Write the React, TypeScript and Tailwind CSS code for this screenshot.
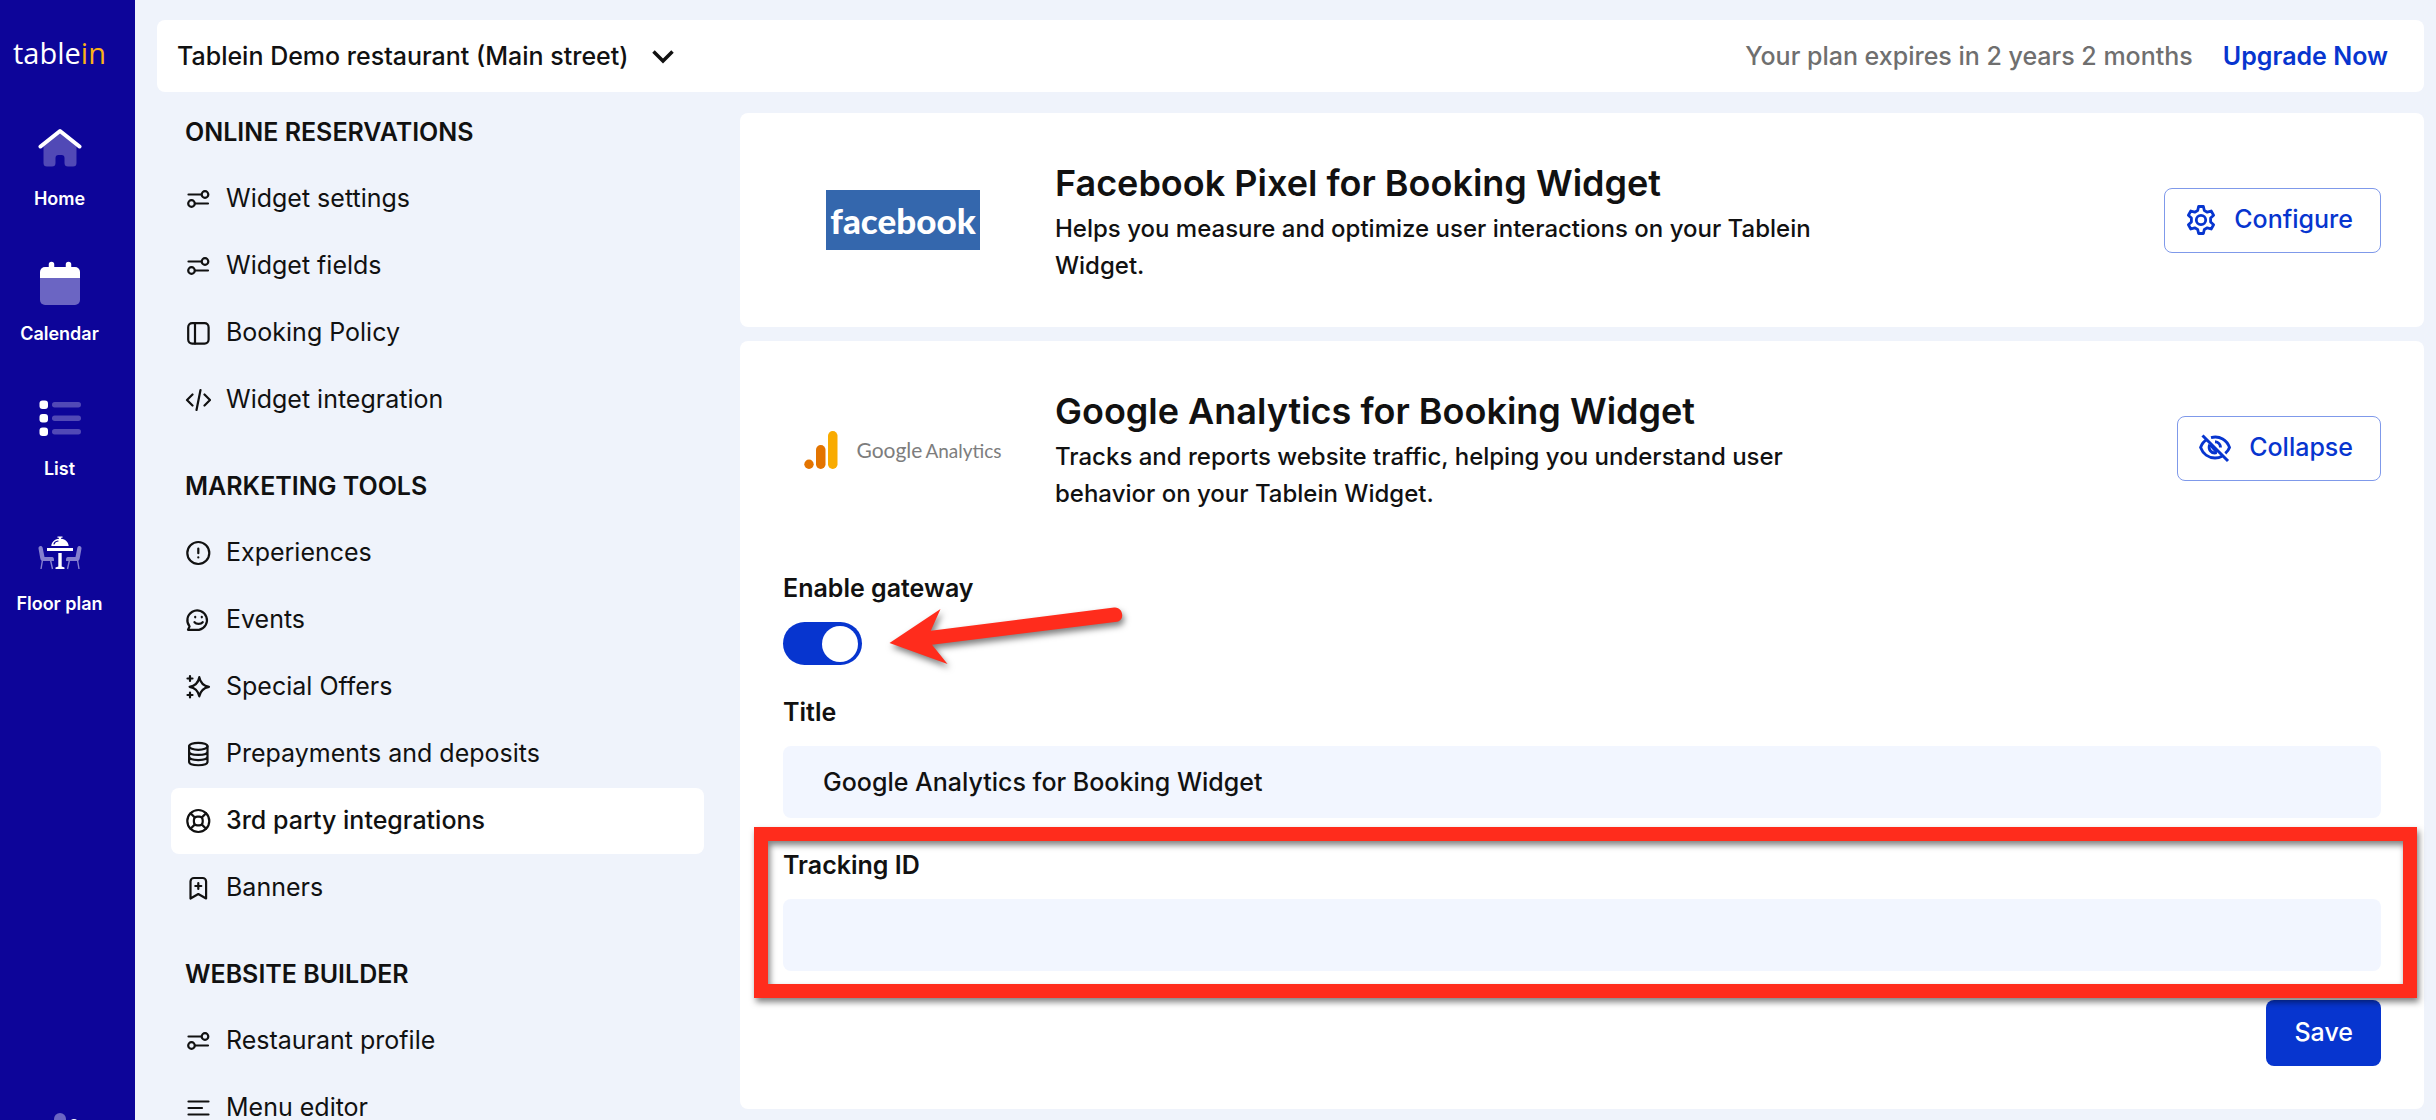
import * as React from 'react';

interface IMenuItem {
  title: string;
  icon: React.ReactNode;
  active?: boolean;
}

interface IMenuSection {
  title: string;
  items: IMenuItem[];
}

const MenuIcon: React.FC<{ children: React.ReactNode }> = ({ children }) => (
  <svg
    className="h-[26px] w-[26px] shrink-0"
    viewBox="0 0 26 26"
    fill="none"
    stroke="currentColor"
    strokeWidth="2.2"
    strokeLinecap="round"
    strokeLinejoin="round"
    aria-hidden="true"
  >
    {children}
  </svg>
);

const SlidersIcon = () => (
  <MenuIcon>
    <path d="M3.5 8.5H16M10 17.5h13" />
    <circle cx="20" cy="8.5" r="3.3" />
    <circle cx="6.5" cy="17.5" r="3.3" />
  </MenuIcon>
);

const PanelIcon = () => (
  <MenuIcon>
    <rect x="3.2" y="3.2" width="20.4" height="20.4" rx="4" />
    <path d="M10 3.2v20.4" />
  </MenuIcon>
);

const CodeIcon = () => (
  <MenuIcon>
    <path d="M7.5 7.5 2 13l5.5 5.5M19.5 7.5 25 13l-5.5 5.5M15.5 3l-4 20" />
  </MenuIcon>
);

const AlertIcon = () => (
  <MenuIcon>
    <circle cx="13.3" cy="13" r="11" />
    <path d="M13.3 8.5v4.7M13.3 17.3v.1" />
  </MenuIcon>
);

const ChatSmileIcon = () => (
  <MenuIcon>
    <path d="M3 22.8l1.6-3.4A9.8 9.8 0 1 1 14 22.8Z" />
    <path d="M9.5 15.2c1.8 2.2 6.4 2.2 8.2 0M10.2 9.8v.5M16.8 9.8v.5" />
  </MenuIcon>
);

const SparkleIcon = () => (
  <MenuIcon>
    <path d="M14.3 3.2c.9 5 4.4 8.6 9.7 9.6-5.3 1-8.8 4.6-9.7 9.6-.9-5-3.9-8.6-9.7-9.6 5.8-1 8.8-4.6 9.7-9.6Z" />
    <path d="M5 2v5M2.5 4.5h5M5 18.5v5M2.5 21h5" />
  </MenuIcon>
);

const DatabaseIcon = () => (
  <MenuIcon>
    <ellipse cx="13.3" cy="5.3" rx="9.2" ry="3.5" />
    <path d="M4.100 5.300v15.400c0 4.700 18.400 4.700 18.400 0V5.300M4.100 10.500c0 4.600 18.400 4.600 18.400 0M4.100 15.600c0 4.600 18.400 4.600 18.400 0" />
  </MenuIcon>
);

const LifebuoyIcon = () => (
  <MenuIcon>
    <circle cx="13.3" cy="13" r="11" />
    <rect x="8.9" y="8.6" width="8.8" height="8.8" rx="3.5" />
    <path d="M5.5 5.2l4.2 4.2M21.1 5.2l-4.2 4.2M5.5 20.8l4.2-4.2M21.1 20.8l-4.2-4.2" />
  </MenuIcon>
);

const BookmarkIcon = () => (
  <MenuIcon>
    <path d="M5.5 23.5V6.5a3.5 3.5 0 0 1 3.5-3.5h8.6a3.5 3.5 0 0 1 3.5 3.5v17l-7.8-4.5Z" />
    <path d="M13.3 8v6M10.3 11h6" />
  </MenuIcon>
);

const LinesIcon = () => (
  <MenuIcon>
    <path d="M3.5 6.5h20M3.5 13h13.5M3.5 19.5h20" />
  </MenuIcon>
);

const HomeIcon = () => (
  <svg className="h-11 w-11" viewBox="0 0 44 44" fill="none" aria-hidden="true">
    <path
      d="M5.5 17.5 22 5l16.5 12.5V37a3.5 3.5 0 0 1-3.5 3.5h-5a3.5 3.5 0 0 1-3.5-3.5v-5a3 3 0 0 0-3-3h-3a3 3 0 0 0-3 3v5a3.5 3.5 0 0 1-3.5 3.5H9A3.5 3.5 0 0 1 5.5 37Z"
      fill="#5149b6"
    />
    <path d="M2.5 20.5 22 5l19.5 15.5" stroke="#fff" strokeWidth="4" strokeLinecap="round" strokeLinejoin="round" />
  </svg>
);

const CalendarIcon = () => (
  <svg className="h-11 w-11" viewBox="0 0 44 44" fill="none" aria-hidden="true">
    <path d="M2 17h40v22a5 5 0 0 1-5 5H7a5 5 0 0 1-5-5Z" fill="#6b65c3" />
    <path d="M2 17v-6a5 5 0 0 1 5-5h30a5 5 0 0 1 5 5v6Z" fill="#fff" />
    <path d="M13.5 3.5V9M30.5 3.5V9" stroke="#fff" strokeWidth="5.5" strokeLinecap="round" />
  </svg>
);

const ListIcon = () => (
  <svg className="h-11 w-11" viewBox="0 0 44 44" fill="none" aria-hidden="true">
    {[4.5, 18, 31.5].map((y) => (
      <React.Fragment key={y}>
        <rect x="1.5" y={y} width="8.5" height="8.5" rx="3" fill="#fff" />
        <rect x="14" y={y + 1.5} width="29" height="5.5" rx="2.7" fill="#5149b6" />
      </React.Fragment>
    ))}
  </svg>
);

const FloorPlanIcon = () => (
  <svg className="h-11 w-11" viewBox="0 0 44 44" fill="none" aria-hidden="true">
    <g fill="#8580cf">
      <path d="M.5 17.5c-.3-3 3.6-3.5 4.2-.5l1.800 9h7.500c1.800 0 2 1.500 2 4H5c-1.800 0-2.500-1-2.800-3Z" />
      <path d="M43.5 17.5c.3-3-3.6-3.5-4.2-.5l-1.800 9H30c-1.800 0-2 1.500-2 4h11c1.800 0 2.500-1 2.800-3Z" />
    </g>
    <path d="M4.5 29 3 38M12.500 29l2 9M39.500 29l1.500 9M31.500 29l-2 9" stroke="#8580cf" strokeWidth="1.4" />
    <path
      d="M19.5 5.5h5v1.300h-1.500v1c4.700.5 7.500 3.700 7.700 7.200H13.300c.2-3.500 3-6.700 7.700-7.200v-1h-1.500ZM9 17h26v3H9ZM20.300 22h3.400v13.500l2.800 1V38h-9v-1.500l2.800-1Z"
      fill="#fff"
    />
    <path d="M16 13c.5-1.500 1.800-2.700 4-3" stroke="#0d0599" strokeWidth="1.2" strokeLinecap="round" />
  </svg>
);

const GearIcon = () => (
  <svg
    className="h-[30px] w-[30px]"
    viewBox="0 0 30 30"
    fill="none"
    stroke="currentColor"
    strokeWidth="2.8"
    strokeLinejoin="round"
    aria-hidden="true"
  >
    <path d="M12.6 1.5h4.8l.9 4 3 1.7 3.9-1.2 2.4 4.2-3 2.800v4l3 2.800-2.400 4.200-3.900-1.200-3 1.700-.9 4h-4.800l-.9-4-3-1.700-3.900 1.200-2.400-4.200 3-2.800v-4l-3-2.800L4.800 6l3.900 1.200 3-1.700Z" />
    <circle cx="15" cy="15" r="4.7" />
  </svg>
);

const EyeOffIcon = () => (
  <svg
    className="h-8 w-8"
    viewBox="0 0 32 32"
    fill="none"
    stroke="currentColor"
    strokeWidth="2.9"
    aria-hidden="true"
  >
    <path d="M8 7.5C5 9.2 2.7 12 1.6 15.5 4 22 9.5 26 16 26c2.5 0 5-.6 7-1.700M12 5.600C21 3.500 28 8 30.500 15.500c-.8 2.200-2.300 4.200-4.200 5.800" />
    <path d="M10.7 12.5c-2 5 1.800 9.500 7 8.200M16 9.800c3.500.2 5.500 2.800 5.500 5.700" />
    <path d="M11.5 13l6.5 7.5" />
    <path d="M3.5 3.5 29 29" strokeWidth="3" />
  </svg>
);

const sideLinks = [
  { title: 'Home', icon: <HomeIcon /> },
  { title: 'Calendar', icon: <CalendarIcon /> },
  { title: 'List', icon: <ListIcon /> },
  { title: 'Floor plan', icon: <FloorPlanIcon /> },
];

const menuSections: IMenuSection[] = [
  {
    title: 'ONLINE RESERVATIONS',
    items: [
      { title: 'Widget settings', icon: <SlidersIcon /> },
      { title: 'Widget fields', icon: <SlidersIcon /> },
      { title: 'Booking Policy', icon: <PanelIcon /> },
      { title: 'Widget integration', icon: <CodeIcon /> },
    ],
  },
  {
    title: 'MARKETING TOOLS',
    items: [
      { title: 'Experiences', icon: <AlertIcon /> },
      { title: 'Events', icon: <ChatSmileIcon /> },
      { title: 'Special Offers', icon: <SparkleIcon /> },
      { title: 'Prepayments and deposits', icon: <DatabaseIcon /> },
      { title: '3rd party integrations', icon: <LifebuoyIcon />, active: true },
      { title: 'Banners', icon: <BookmarkIcon /> },
    ],
  },
  {
    title: 'WEBSITE BUILDER',
    items: [
      { title: 'Restaurant profile', icon: <SlidersIcon /> },
      { title: 'Menu editor', icon: <LinesIcon /> },
    ],
  },
];

const Sidebar = () => (
  <aside className="flex w-[135px] shrink-0 flex-col items-center bg-[#0d0599] pr-4 text-white">
    <a href="#" className="mt-[31px] font-['Open_Sans',sans-serif] text-[29px] leading-[44px]">
      table<span className="text-[#fbb216]">in</span>
    </a>
    <nav className="mt-[51px] flex flex-col gap-[50px]">
      {sideLinks.map((link) => (
        <a key={link.title} href="#" className="flex flex-col items-center gap-[17px]">
          {link.icon}
          <span className="text-lg leading-6 font-semibold whitespace-nowrap">{link.title}</span>
        </a>
      ))}
    </nav>
    <a href="#" aria-label="Settings" className="mt-auto h-2 shrink-0">
      <svg className="h-11 w-11" viewBox="0 0 44 44" aria-hidden="true">
        <circle cx="22" cy="7" r="6" fill="#6b65c3" />
        <circle cx="36" cy="12" r="5" fill="#fff" />
      </svg>
    </a>
  </aside>
);

const Header = () => (
  <header className="flex h-[72px] shrink-0 items-center justify-between rounded-lg bg-white pr-9 pl-5">
    <div className="relative flex items-center">
      <select
        aria-label="Restaurant"
        className="appearance-none bg-transparent pr-[50px] text-[25px] leading-8 font-medium outline-none"
      >
        <option>Tablein Demo restaurant (Main street)</option>
      </select>
      <svg
        className="pointer-events-none absolute right-1 h-6 w-6"
        viewBox="0 0 24 24"
        fill="none"
        stroke="currentColor"
        strokeWidth="3.5"
        aria-hidden="true"
      >
        <path d="M2.5 7.5 12 17l9.5-9.5" />
      </svg>
    </div>
    <div className="flex items-center gap-[30px] text-[25px] leading-8">
      <p className="font-medium text-[#6f6f6f]">Your plan expires in 2 years 2 months</p>
      <a href="#" className="font-semibold text-[#0735cf]">
        Upgrade Now
      </a>
    </div>
  </header>
);

const SettingsMenu = () => (
  <nav className="flex w-[533px] shrink-0 flex-col gap-[21px] pt-2">
    {menuSections.map((section) => (
      <section key={section.title}>
        <h2 className="flex h-[66px] items-center pl-3.5 text-[25px] font-semibold">{section.title}</h2>
        <ul className="flex flex-col gap-px">
          {section.items.map((item) => (
            <li key={item.title}>
              <a
                href="#"
                className={`flex h-[66px] items-center gap-[15px] rounded-lg pl-3.5 text-[25px] ${
                  item.active ? 'bg-white font-medium' : ''
                }`}
              >
                {item.icon}
                {item.title}
              </a>
            </li>
          ))}
        </ul>
      </section>
    ))}
  </nav>
);

interface IIntegrationHeadProps {
  logo: React.ReactNode;
  title: string;
  description: string;
  icon: React.ReactNode;
  action: string;
  onAction?: () => void;
}

const IntegrationHead: React.FC<IIntegrationHeadProps> = (props) => (
  <div className="flex items-center">
    <div className="flex w-60 shrink-0 justify-center">{props.logo}</div>
    <div className="ml-8 w-[800px]">
      <h3 className="text-4xl leading-[54px] font-semibold">{props.title}</h3>
      <p className="text-2xl leading-[37px] font-medium">{props.description}</p>
    </div>
    <button
      type="button"
      onClick={props.onAction}
      className="ml-auto flex h-[65px] items-center gap-[18px] rounded-lg border border-[#7f99ea] pr-[27px] pl-[21px] text-[25px] font-medium text-[#0735cf]"
    >
      {props.icon}
      {props.action}
    </button>
  </div>
);

const FacebookLogo = () => (
  <div className="flex h-[60px] w-[154px] items-center justify-center bg-[#3467ad] font-['Lato',sans-serif] text-[35px] leading-[60px] font-black text-white">
    facebook
  </div>
);

const AnalyticsLogo = () => (
  <div className="flex items-center gap-[18px] pt-1">
    <svg className="h-[38px] w-[34px]" viewBox="0 0 34 38" aria-hidden="true">
      <circle cx="5" cy="33.3" r="4.7" fill="#e37400" />
      <rect x="12" y="14" width="9.5" height="24" rx="4.7" fill="#e37400" />
      <rect x="24" y="0" width="9.5" height="38" rx="4.7" fill="#f9ab00" />
    </svg>
    <span className="flex items-baseline gap-[3px] font-['Lato',sans-serif] text-[19px] text-[#7d7d7d]">
      <span className="text-[21px]">Google</span>
      <span>Analytics</span>
    </span>
  </div>
);

const inputClass =
  'mt-[18px] block h-[72px] w-full rounded-lg bg-[#f2f6ff] px-10 text-[25px] font-medium outline-none';
const labelClass = 'block text-[25px] leading-8 font-semibold';

const AnalyticsForm = () => {
  const [enabled, setEnabled] = React.useState<boolean>(true);
  const [title, setTitle] = React.useState<string>('Google Analytics for Booking Widget');
  const [trackingId, setTrackingId] = React.useState<string>('');

  return (
    <form className="mt-[60px]" onSubmit={(e) => e.preventDefault()}>
      <label htmlFor="enable-gateway" className={labelClass}>
        Enable gateway
      </label>
      <div className="relative mt-[18px]">
        <input
          id="enable-gateway"
          type="checkbox"
          checked={enabled}
          onChange={(e) => setEnabled(e.target.checked)}
          className="flex h-[43px] w-[79px] appearance-none items-center rounded-full bg-gray-300 px-1 before:block before:h-9 before:w-9 before:rounded-full before:bg-white before:content-[''] checked:justify-end checked:bg-[#0735cf]"
        />
        <svg
          className="pointer-events-none absolute -top-[22px] left-[100px] h-[80px] w-[250px] drop-shadow-[2px_4px_3px_rgba(0,0,0,0.5)]"
          viewBox="0 0 250 80"
          aria-hidden="true"
        >
          <path
            d="M6.5 43 57.5 9 47.8 30.8 231 7.6C240 6.5 242.5 20 234 21.7L49 44.8 64.5 64Z"
            fill="#ff2c1c"
          />
        </svg>
      </div>

      <div className="mt-[31px]">
        <label htmlFor="title" className={labelClass}>
          Title
        </label>
        <input
          id="title"
          type="text"
          value={title}
          onChange={(e) => setTitle(e.target.value)}
          className={inputClass}
        />
      </div>

      <div className="relative mt-[31px]">
        <label htmlFor="tracking-id" className={labelClass}>
          Tracking ID
        </label>
        <input
          id="tracking-id"
          type="text"
          value={trackingId}
          onChange={(e) => setTrackingId(e.target.value)}
          className={inputClass}
        />
        <div className="pointer-events-none absolute -top-[22px] -right-9 -bottom-[27px] -left-[29px] z-10 border-[14px] border-[#ff2c1c] drop-shadow-[2px_4px_3px_rgba(0,0,0,0.5)]" />
      </div>

      <div className="mt-[29px] flex justify-end">
        <button
          type="submit"
          className="h-[66px] rounded-lg bg-[#0735cf] px-7 text-[25px] font-medium text-white"
        >
          Save
        </button>
      </div>
    </form>
  );
};

const App = () => {
  const [open, setOpen] = React.useState<boolean>(true);

  return (
    <div className="flex h-screen overflow-hidden bg-[#eff3fb] font-['Inter',sans-serif] text-[#111]">
      <Sidebar />
      <div className="flex min-w-0 grow flex-col pt-5 pr-3 pl-[22px]">
        <Header />
        <div className="flex min-h-0 grow gap-9 pl-3.5">
          <SettingsMenu />
          <main className="flex min-w-0 grow flex-col gap-3.5 pt-[21px]">
            <section className="rounded-lg bg-white p-[43px]">
              <IntegrationHead
                logo={<FacebookLogo />}
                title="Facebook Pixel for Booking Widget"
                description="Helps you measure and optimize user interactions on your Tablein Widget."
                icon={<GearIcon />}
                action="Configure"
              />
            </section>
            <section className="rounded-lg bg-white p-[43px]">
              <IntegrationHead
                logo={<AnalyticsLogo />}
                title="Google Analytics for Booking Widget"
                description="Tracks and reports website traffic, helping you understand user behavior on your Tablein Widget."
                icon={<EyeOffIcon />}
                action={open ? 'Collapse' : 'Configure'}
                onAction={() => setOpen(!open)}
              />
              {open ? <AnalyticsForm /> : null}
            </section>
          </main>
        </div>
      </div>
    </div>
  );
};

export default App;
